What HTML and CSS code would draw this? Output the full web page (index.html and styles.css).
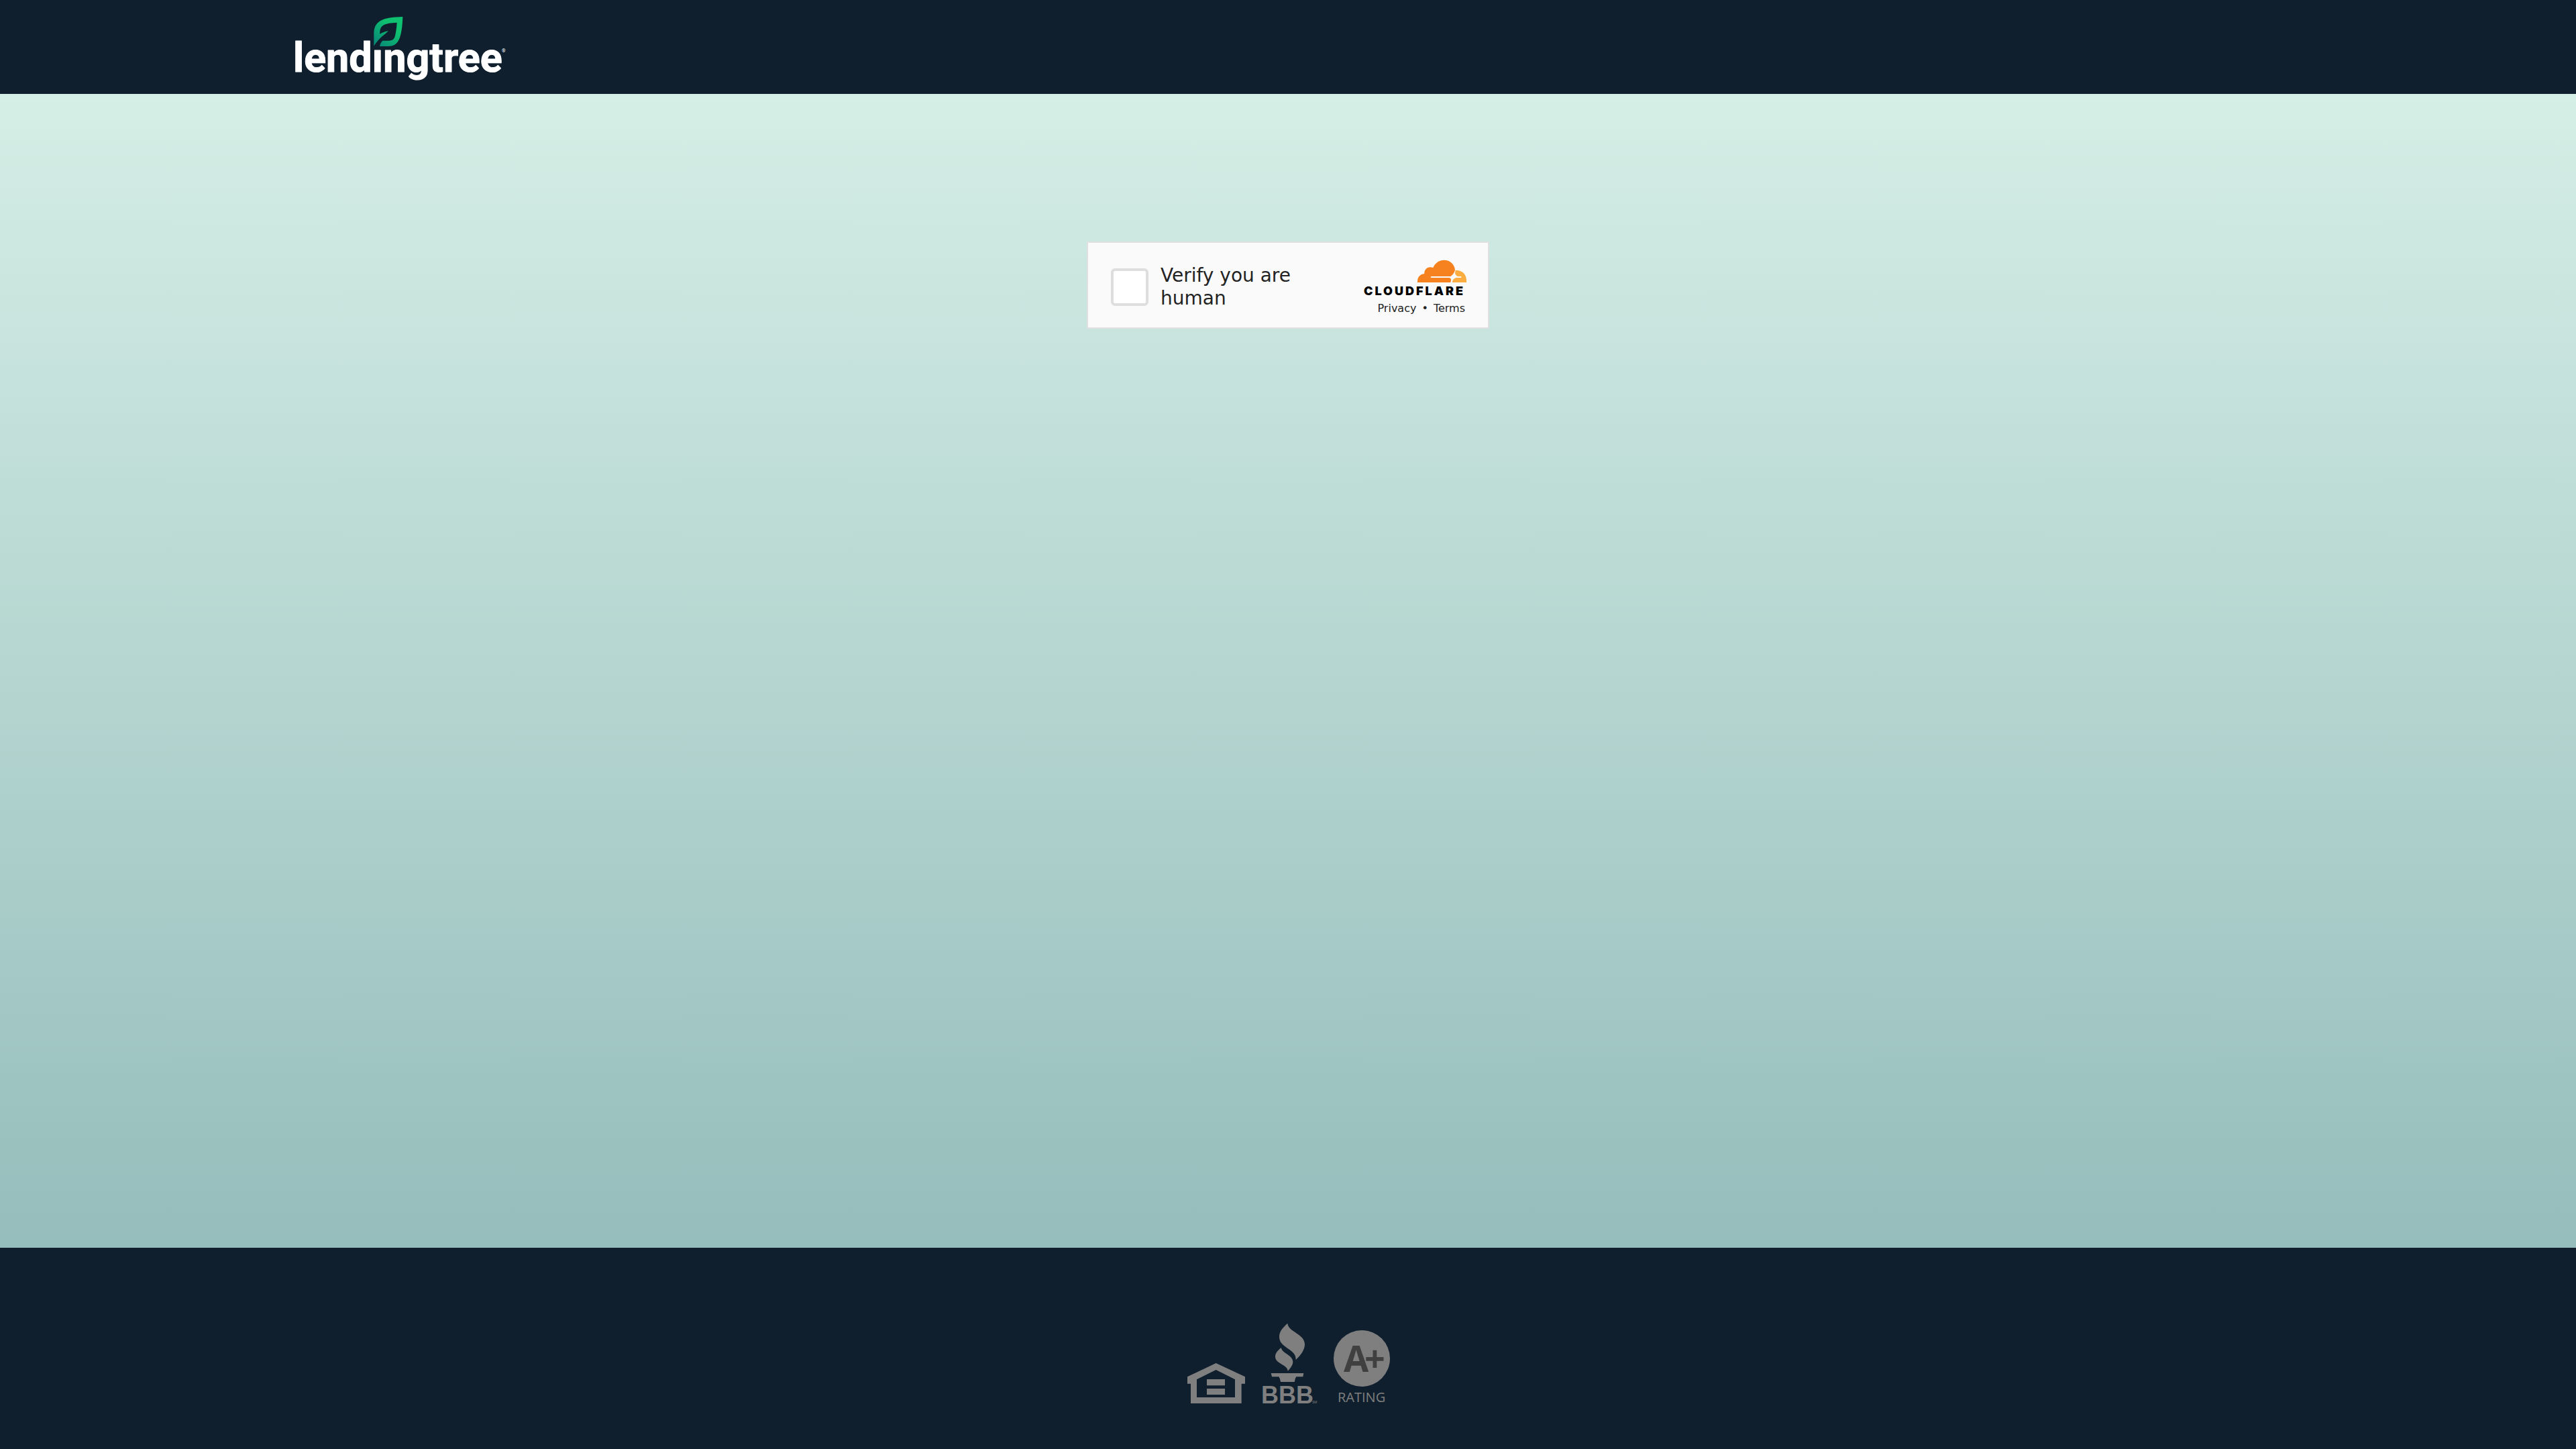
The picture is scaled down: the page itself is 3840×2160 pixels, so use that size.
FILE: index.html
```html
<!DOCTYPE html>
<html lang="en">
<head>
<meta charset="utf-8">
<title>LendingTree</title>
<link rel="stylesheet" href="styles.css">
</head>
<body>
<header class="site-header">
  <div class="container">
    <a class="brand" href="#" aria-label="LendingTree home">
      <svg width="320" height="100" viewBox="0 0 320 100">
        <defs>
          <linearGradient id="leaf" x1="0" y1="1" x2="0.6" y2="0.3">
            <stop offset="0" stop-color="#078378"/>
            <stop offset="1" stop-color="#0fc070"/>
          </linearGradient>
        </defs>
        <text class="wordmark" x="-3" y="87">lendıngtree</text>
        <text class="registered" x="308" y="58">®</text>
        <g transform="scale(0.33333) translate(-60 -60)">
          <path fill="url(#leaf)" d="M412 206V148C412 118 426 99 452 88C473 79 500 77 541 75C540 112 536 145 528 168C518 194 505 207 474 207H438C440 197 444 188 451 182H478C498 181 504 174 508 155C512 137 514 120 515 101C487 102 467 105 454 113C441 121 438 135 439 152C451 145 463 140 477 138C461 154 452 159 443 168C432 179 422 190 412 206Z"/>
        </g>
      </svg>
    </a>
  </div>
</header>
<main class="content">
  <form class="challenge">
    <input class="challenge-box" type="checkbox" id="human">
    <label class="challenge-label" for="human">Verify you are human</label>
    <div class="provider">
      <svg width="156" height="56" viewBox="0 0 156 56" role="img" aria-label="Cloudflare">
        <g transform="translate(-72 -36) scale(0.33333)">
          <path fill="#f6821f" d="M459 213C458 190 469 176 490 174C488 154 506 138 529 147C538 126 556 113 578 113C605 113 625 132 627 158C624 170 617 179 607 186H520Q516 189 520 192H601Q610 194 609 204L607 213Z"/>
          <path fill="#fbad41" d="M629 159C658 156 678 177 678 203V213H615C616 199 624 193 635 192H654Q658 189 654 186H638Q629 182 627 172Z"/>
        </g>
        <text class="provider-name" x="1" y="54">CLOUDFLARE</text>
      </svg>
      <div class="provider-links"><a href="#">Privacy</a><span>•</span><a href="#">Terms</a></div>
    </div>
  </form>
</main>
<footer class="site-footer">
  <svg width="86" height="60" viewBox="60 216 258 180" role="img" aria-label="Equal housing lender">
    <path fill="#7f7f7f" fill-rule="evenodd" d="M188 216L318 277V308H302V396H75V308H60V277ZM188 246L102 289V369H273V289ZM147 288H228V316H147ZM147 330H228V357H147Z"/>
  </svg>
  <svg width="84" height="120" viewBox="0 0 84 120" role="img" aria-label="BBB">
    <g fill="#7f7f7f" transform="translate(-130 -12) scale(0.33333)">
      <path d="M508 38C512 78 585 84 585 132C585 158 564 184 545 201C549 151 471 150 471 98C471 74 487 57 508 38Z"/>
      <path d="M479 147C485 174 532 179 532 211C532 224 521 239 509 251C507 221 453 220 453 187C453 170 467 157 479 147Z"/>
      <path d="M434 261H580L577 277H547Q541 284 539 300H477Q475 284 469 277H438Z"/>
    </g>
    <text class="bbb" x="0" y="120">BBB</text>
    <text class="mark" x="76" y="120">SM</text>
  </svg>
  <svg width="84" height="110" viewBox="0 0 84 110" role="img" aria-label="A+ rating">
    <circle cx="42" cy="43" r="42" fill="#7f7f7f"/>
    <text class="grade" x="15" y="63">A<tspan x="46">+</tspan></text>
    <text class="rating" x="6" y="108">RATING</text>
  </svg>
</footer>
</body>
</html>
```
FILE: styles.css
```css
* { box-sizing: border-box; }

body {
  margin: 0;
  min-height: 100vh;
  display: flex;
  flex-direction: column;
  font-family: "DejaVu Sans", sans-serif;
  color: #232323;
}

svg {
  display: block;
  overflow: visible;
}

.site-header {
  padding: 20px 0;
  background: #0f1f2e;
}

.container {
  max-width: 2960px;
  margin: 0 auto;
}

.brand { display: inline-block; vertical-align: top; }

.wordmark {
  font: 700 61px Roboto, sans-serif;
  fill: #fff;
  stroke: #fff;
  stroke-width: 1px;
  stroke-linejoin: round;
}

.registered {
  font: 7px Roboto, sans-serif;
  fill: #fff;
}

.content {
  flex: 1;
  padding: 220px 20px;
  background: linear-gradient(#d5eee6, #95bdbb);
}

.challenge {
  display: flex;
  align-items: center;
  width: 600px;
  max-width: 100%;
  height: 130px;
  margin: 0 auto;
  padding: 6px 30px 0 34px;
  border: 2px solid #e0e0e0;
  background: #fafafa;
}

.challenge-box {
  appearance: none;
  flex: none;
  width: 56px;
  height: 56px;
  margin: 0;
  border: 4px solid #dedede;
  border-radius: 6px;
  background: #fff;
}

.challenge-label {
  flex: 1;
  padding: 0 20px 0 18px;
  font-size: 28px;
  line-height: 34px;
}

.provider {
  display: flex;
  flex-direction: column;
  align-items: flex-end;
  gap: 8px;
}

.provider-name {
  font: 900 18px Inter, sans-serif;
  letter-spacing: 3px;
  fill: #000;
}

.provider-links {
  display: flex;
  gap: 8px;
  padding-right: 4px;
  font-size: 16px;
  line-height: 20px;
}

.provider-links a {
  color: inherit;
  text-decoration: none;
}

.site-footer {
  display: flex;
  justify-content: center;
  align-items: flex-end;
  gap: 24px;
  min-height: 300px;
  padding: 0 0 68px 2px;
  background: #0f1f2e;
}

.bbb {
  font: 700 36px "Liberation Sans", sans-serif;
  fill: #7f7f7f;
}

.mark {
  font: 5px "Liberation Sans", sans-serif;
  fill: #7f7f7f;
}

.grade {
  font: 700 54px "Open Sans", sans-serif;
  fill: #404040;
}

.rating {
  font: 20px "Open Sans", sans-serif;
  fill: #7f7f7f;
}
```
